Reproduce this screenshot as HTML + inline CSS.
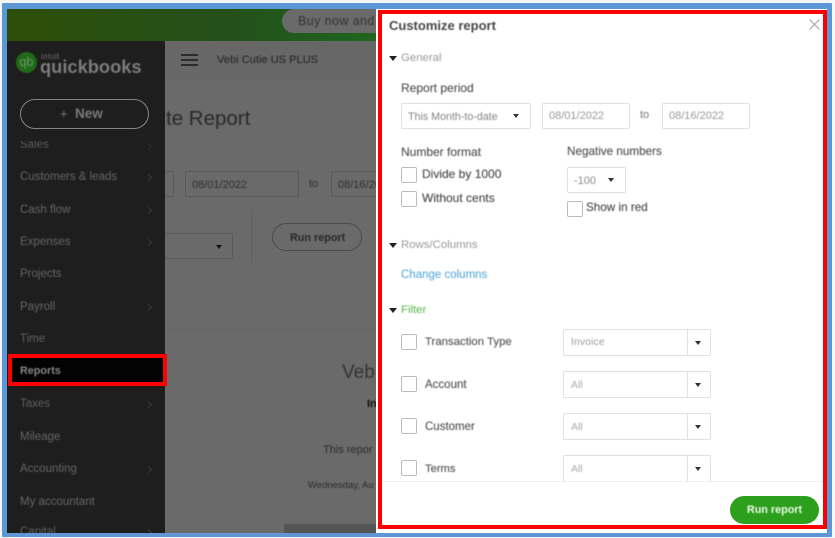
<!DOCTYPE html>
<html><head><meta charset="utf-8"><style>
html,body{margin:0;padding:0;background:#fff}
#p{position:relative;width:835px;height:538px;overflow:hidden;background:#f4f6f8;font-family:"Liberation Sans",sans-serif}
#p div{position:absolute;white-space:nowrap;box-sizing:border-box}
.t{filter:blur(.4px)}
.s{left:20px;color:#666;font-size:11.5px;line-height:14px;filter:blur(.55px);margin-top:1px}
.c{left:146px;width:5px;height:5px;border-top:1px solid #3c3c3c;border-right:1px solid #3c3c3c;transform:rotate(45deg)}
.b{border:1px solid #dfe1e4;border-radius:2px;background:#fff}
.cb{border:1px solid #b9bcc0;border-radius:2px;background:#fff;width:16px;height:16px}
.l{color:#555;font-size:11.5px;line-height:14px;filter:blur(.4px);text-shadow:0 0 .4px #777}
.m{font-size:12px}
.g{color:#8c8c8c;font-size:11px;line-height:14px;filter:blur(.4px)}
.tri{width:0;height:0;border-left:4px solid transparent;border-right:4px solid transparent;border-top:5px solid #222}
.trs{width:0;height:0;border-left:3px solid transparent;border-right:3px solid transparent;border-top:4px solid #333}
.h{color:#999;font-size:11.4px;line-height:14px;filter:blur(.4px)}
.sel{left:563px;width:148px;height:27px}
.sel i{position:absolute;left:123px;top:0;bottom:0;width:1px;background:#dfe1e4}
.sel b{position:absolute;left:131px;top:11px;width:0;height:0;border-left:3px solid transparent;border-right:3px solid transparent;border-top:4px solid #333}
.main{color:#3d3d3d;filter:blur(.55px)}
</style></head><body><div id="p">
<!-- frame -->
<div style="left:2px;top:3px;width:830px;height:534px;background:#5c98d6;border-radius:1px"></div>
<div style="left:7px;top:9px;width:820px;height:524px;background:#6a6a6a"></div>
<!-- banner -->
<div style="left:7px;top:9px;width:370px;height:32px;background:linear-gradient(90deg,#2d4f08,#24501a 60%,#1f661e)"></div>
<div style="left:282px;top:9px;width:110px;height:24px;border-radius:12px;background:#6a6a6a"></div>
<div class="main" style="left:298px;top:14px;font-size:12.5px;line-height:15px;letter-spacing:.4px;color:#333">Buy now and</div>
<!-- header -->
<div style="left:165px;top:41px;width:212px;height:40px;background:#676767"></div>
<div style="left:181px;top:54px;width:17px;height:2px;background:#2c2c2c"></div>
<div style="left:181px;top:59px;width:17px;height:2px;background:#2c2c2c"></div>
<div style="left:181px;top:64px;width:17px;height:2px;background:#2c2c2c"></div>
<div class="main" style="left:217px;top:53px;font-size:11.1px;line-height:14px;color:#222">Vebi Cutie US PLUS</div>
<!-- main content -->
<div class="main" style="left:166px;top:107px;font-size:20.5px;line-height:24px;color:#2a2a2a">te Report</div>
<div style="left:120px;top:171px;width:54px;height:26px;border:1px solid #5a5a5a;border-radius:2px"></div>
<div style="left:185px;top:171px;width:114px;height:26px;border:1px solid #5a5a5a;border-radius:2px"></div>
<div class="main" style="left:192px;top:178px;font-size:11px;line-height:14px;color:#303030">08/01/2022</div>
<div class="main" style="left:309px;top:177px;font-size:11px;line-height:14px;color:#303030">to</div>
<div style="left:331px;top:171px;width:60px;height:26px;border:1px solid #5a5a5a;border-radius:2px"></div>
<div class="main" style="left:338px;top:178px;font-size:11px;line-height:14px;color:#303030">08/16/2022</div>
<div style="left:140px;top:233px;width:93px;height:26px;border:1px solid #5a5a5a;border-radius:2px"></div>
<div class="trs" style="left:216px;top:245px;border-top-color:#111"></div>
<div style="left:251px;top:214px;width:1px;height:48px;background:#5e5e5e"></div>
<div style="left:272px;top:223px;width:90px;height:28px;border:1px solid #4a4a4a;border-radius:14px"></div>
<div class="main" style="left:290px;top:231px;font-size:10.8px;line-height:14px;font-weight:bold;color:#282828">Run report</div>
<div style="left:165px;top:329px;width:212px;height:1px;background:#646464"></div>
<div class="main" style="left:342px;top:361px;font-size:19px;line-height:24px;color:#333">Veb</div>
<div class="main" style="left:367px;top:397px;font-size:11px;line-height:14px;font-weight:bold;color:#111">In</div>
<div class="main" style="left:323px;top:443px;font-size:11px;line-height:14px;color:#2c2c2c">This repor</div>
<div class="main" style="left:308px;top:480px;font-size:9.5px;line-height:12px;color:#2c2c2c">Wednesday, Au</div>
<div style="left:284px;top:524px;width:93px;height:9px;background:#555"></div>
<!-- sidebar -->
<div style="left:7px;top:41px;width:158px;height:492px;background:#1e1e1e"></div>
<div style="left:16px;top:52px;width:21px;height:21px;border-radius:50%;background:#1f6a18;filter:blur(.4px)"></div>
<div class="t" style="left:17px;top:55px;width:19px;text-align:center;color:#6f9a68;font-size:12.5px;line-height:15px">qb</div>
<div class="t" style="left:41px;top:52px;font-size:8px;line-height:9px;color:#6e6e6e;letter-spacing:.3px">intuit</div>
<div class="t" style="left:40px;top:56px;font-size:18.3px;line-height:22px;font-weight:bold;color:#7c7c7c;filter:blur(.6px)">quickbooks<span style="font-size:6px;font-weight:normal">.</span></div>
<div style="left:20px;top:99px;width:129px;height:30px;border:1px solid #858585;border-radius:15px"></div>
<div class="t" style="left:60px;top:106px;font-size:13px;line-height:15px;color:#7a7a7a">+</div>
<div class="t" style="left:75px;top:106px;font-size:13.5px;line-height:15px;color:#7a7a7a;font-weight:bold">New</div>
<div style="left:20px;top:141px;width:130px;height:7px;overflow:hidden"><div class="s" style="left:0;top:-4px;color:#5c5c5c">Sales</div></div>
<div class="c" style="top:144px;border-color:#2e2e2e"></div>
<div class="s" style="top:169px">Customers &amp; leads</div><div class="c" style="top:175px"></div>
<div class="s" style="top:202px">Cash flow</div><div class="c" style="top:208px"></div>
<div class="s" style="top:234px">Expenses</div><div class="c" style="top:240px"></div>
<div class="s" style="top:266px">Projects</div>
<div class="s" style="top:299px">Payroll</div><div class="c" style="top:305px"></div>
<div class="s" style="top:331px;color:#606060">Time</div>
<div style="left:8px;top:354px;width:159px;height:32px;background:#030303;border:4px solid #ff0000"></div>
<div class="s" style="top:363px;font-weight:bold;font-size:10.8px;color:#858585">Reports</div>
<div class="s" style="top:396px;color:#606060">Taxes</div><div class="c" style="top:402px"></div>
<div class="s" style="top:429px">Mileage</div>
<div class="s" style="top:461px">Accounting</div><div class="c" style="top:467px"></div>
<div class="s" style="top:494px">My accountant</div>
<div style="left:7px;top:524px;width:158px;height:9px;overflow:hidden"><div class="s" style="left:13px;top:0;color:#606060">Capital</div><div class="c" style="left:139px;top:6px"></div></div>
<!-- panel -->
<div style="left:376px;top:9px;width:451px;height:524px;background:#fff"></div>
<div class="t" style="left:389px;top:18px;font-size:13px;line-height:16px;font-weight:bold;color:#484848">Customize report</div>
<svg style="position:absolute;left:808px;top:18px" width="13" height="13" viewBox="0 0 13 13"><path d="M1.500 1.500 L11.500 11.500 M11.500 1.500 L1.500 11.500" stroke="#a8a8a8" stroke-width="1.200" fill="none"/></svg>
<div class="tri" style="left:389px;top:56px"></div>
<div class="h" style="left:401px;top:51px">General</div>
<div class="l m" style="left:401px;top:81px">Report period</div>
<div class="b" style="left:401px;top:103px;width:130px;height:26px"></div>
<div class="g" style="left:408px;top:110px;font-size:10.7px;color:#858585">This Month-to-date</div>
<div class="trs" style="left:513px;top:114px"></div>
<div class="b" style="left:542px;top:103px;width:88px;height:26px"></div>
<div class="g" style="left:549px;top:109px;color:#999">08/01/2022</div>
<div class="g" style="left:640px;top:108px;color:#777">to</div>
<div class="b" style="left:662px;top:103px;width:88px;height:26px"></div>
<div class="g" style="left:669px;top:109px;color:#999">08/16/2022</div>
<div class="l m" style="left:401px;top:145px">Number format</div>
<div class="l m" style="left:567px;top:145px;font-size:11.7px">Negative numbers</div>
<div class="cb" style="left:401px;top:167px"></div>
<div class="l m" style="left:422px;top:167px;color:#4e4e4e">Divide by 1000</div>
<div class="cb" style="left:401px;top:191px"></div>
<div class="l m" style="left:422px;top:191px;color:#4e4e4e">Without cents</div>
<div class="b" style="left:567px;top:167px;width:59px;height:26px"></div>
<div class="g" style="left:574px;top:174px;color:#8a8a8a">-100</div>
<div class="trs" style="left:608px;top:178px"></div>
<div class="cb" style="left:567px;top:201px"></div>
<div class="l" style="left:586px;top:201px;color:#4e4e4e;font-size:11.7px">Show in red</div>
<div class="tri" style="left:389px;top:243px"></div>
<div class="h" style="left:401px;top:238px">Rows/Columns</div>
<div class="g" style="left:401px;top:268px;font-size:11.5px;color:#4ba3d8">Change columns</div>
<div class="tri" style="left:389px;top:308px"></div>
<div class="h" style="left:401px;top:303px;color:#56b848">Filter</div>
<div class="cb" style="left:401px;top:334px"></div>
<div class="l" style="left:425px;top:335px;color:#5a5a5a;font-size:11.4px">Transaction Type</div>
<div class="b sel" style="top:329px"><i></i><b></b></div>
<div class="g" style="left:571px;top:336px;font-size:10px;color:#999;letter-spacing:.3px">Invoice</div>
<div class="cb" style="left:401px;top:376px"></div>
<div class="l" style="left:425px;top:378px;color:#5a5a5a">Account</div>
<div class="b sel" style="top:371px"><i></i><b></b></div>
<div class="g" style="left:571px;top:378px;font-size:10.5px;color:#aaa">All</div>
<div class="cb" style="left:401px;top:418px"></div>
<div class="l" style="left:425px;top:420px;color:#5a5a5a">Customer</div>
<div class="b sel" style="top:413px"><i></i><b></b></div>
<div class="g" style="left:571px;top:420px;font-size:10.5px;color:#aaa">All</div>
<div class="cb" style="left:401px;top:460px"></div>
<div class="l" style="left:425px;top:462px;color:#5a5a5a;font-size:11.2px">Terms</div>
<div style="left:563px;top:455px;width:148px;height:26px;overflow:hidden"><div class="b sel" style="left:0;top:0"><i></i><b></b></div></div>
<div class="g" style="left:571px;top:462px;font-size:10.5px;color:#aaa">All</div>
<div style="left:381px;top:481px;width:442px;height:1px;background:#eef0f2"></div>
<div style="left:730px;top:496px;width:89px;height:28px;border-radius:14px;background:#2ca01c"></div>
<div class="t" style="left:730px;top:503px;width:89px;text-align:center;font-size:10.8px;line-height:14px;font-weight:bold;color:#eef7ea">Run report</div>
<!-- red box -->
<div style="left:378px;top:10px;width:449px;height:519px;border:4px solid #ff0000"></div>
<div style="left:376px;top:9px;width:2px;height:524px;background:#fff"></div>
</div></body></html>
